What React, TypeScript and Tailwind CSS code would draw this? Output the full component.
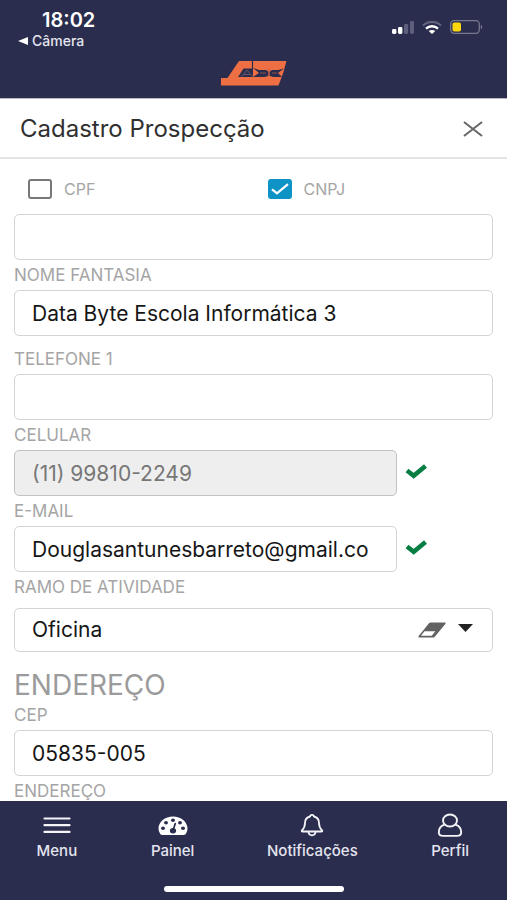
import React, { useState } from 'react'

interface FieldProps {
    id: string
    label?: string
    name?: string
    value: string
    onChange?: (value: string) => void
    type?: string
    disabled?: boolean
    verified?: boolean
}

const labelClass = 'block h-[30px] text-[17px] leading-[30px] text-[#a5a5a5]'

function CheckMark() {
    return (
        <svg viewBox="0 0 22 16" className="w-[22px] h-4 mb-1 shrink-0" fill="none" aria-hidden="true">
            <path d="M2 7.5 8.7 12.7 20.5 3" stroke="#067d43" strokeWidth="4.6" />
        </svg>
    )
}

function Field({ id, label, name, value, onChange, type = 'text', disabled, verified }: FieldProps) {
    return (
        <div>
            {label && <label htmlFor={id} className={labelClass}>{label}</label>}
            <div className="flex items-center gap-2">
                <input
                    id={id}
                    type={type}
                    aria-label={label ? undefined : name}
                    value={value}
                    disabled={disabled}
                    onChange={e => onChange?.(e.target.value)}
                    className={`h-[46px] min-w-0 rounded-[5px] border px-[17px] text-[21px] outline-none ${verified ? 'w-4/5' : 'w-full'} ${disabled ? 'border-[#c2c2c2] bg-[#eeeeee] text-[#777777]' : 'border-[#d4d4d4] bg-white text-[#161616]'}`}
                />
                {verified && <CheckMark />}
            </div>
        </div>
    )
}

function CheckOption({ label, checked, onChange }: { label: string; checked: boolean; onChange: () => void }) {
    return (
        <label className="flex items-center gap-3 pl-3.5 text-base leading-6 text-[#a5a5a5]">
            <span className="relative block w-6 h-5">
                <input
                    type="checkbox"
                    checked={checked}
                    onChange={onChange}
                    className="block w-6 h-5 appearance-none rounded-[3px] border-2 border-[#787878] checked:border-[#0d93c6] checked:bg-[#0d93c6]"
                />
                {checked && (
                    <svg viewBox="0 0 24 20" className="absolute inset-0 w-6 h-5 pointer-events-none" fill="none" aria-hidden="true">
                        <path d="M4 10.3 9 14.4 20 5.2" stroke="#fff" strokeWidth="2.2" />
                    </svg>
                )}
            </span>
            {label}
        </label>
    )
}

function StatusIcons() {
    return (
        <div className="flex items-center gap-2" aria-hidden="true">
            {/* Signal */}
            <svg viewBox="0 0 22 13" className="w-[22px] h-[13px]">
                <rect x="0" y="8" width="4.4" height="5" rx="1.4" fill="#fff" />
                <rect x="6" y="6" width="4.4" height="7" rx="1.4" fill="#fff" />
                <rect x="12" y="3" width="4.2" height="10" rx="1.4" fill="#5d5f7c" />
                <rect x="18" y="0" width="4" height="13" rx="1.4" fill="#5d5f7c" />
            </svg>
            {/* Wi-Fi */}
            <svg viewBox="0 0 20 13" className="w-5 h-[13px]" fill="none">
                <path d="M1 4.5C6-.2 14-.2 19 4.5" stroke="#64667f" strokeWidth="2" />
                <path d="M4 7.6c3.4-3 8.6-3 12 0" stroke="#fff" strokeWidth="2.5" />
                <path d="M6.7 10.1c2-1.5 4.6-1.5 6.6 0L10 13z" fill="#fff" />
            </svg>
            {/* Battery */}
            <svg viewBox="0 0 33 14" className="w-[33px] h-3.5">
                <rect x=".7" y=".7" width="28.6" height="12.6" rx="3.5" fill="none" stroke="#77798f" strokeWidth="1.3" />
                <rect x="2.5" y="2.5" width="8.5" height="9" rx="1.8" fill="#fdd60b" />
                <path d="M30.8 5c1.9.5 1.9 3.5 0 4z" fill="#77798f" />
            </svg>
        </div>
    )
}

function Logo() {
    return (
        <svg viewBox="0 0 66 26" className="w-[66px] h-[26px]" role="img" aria-label="ABC">
            <path d="M18 1H65.5L62.5 12 60.5 17.5 57.5 25.5H0V18H6.5z" fill="#ee6f43" />
            {/* letter A opening */}
            <path d="M17 17 22.5 8.500H32V17z" fill="#2b2d4e" />
            <path d="M20.5 16.5 26 10 31.500 16.500M23 14.500H29" stroke="#685765" strokeWidth="1" fill="none" />
            <path d="M31.500 1V9" stroke="#2b2d4e" strokeWidth="1.200" />
            {/* letters B and C */}
            <path d="M32 8 38 10H45L48 12 51 10H57L63 8.500 57 13 61 17H52L48 15.500 44 17H32L38 13z" fill="#2b2d4e" />
            <path d="M48 9V17" stroke="#c4624a" strokeWidth="1.500" />
            <path d="M39 13H45M51 13H56" stroke="#8b504f" strokeWidth="1" />
        </svg>
    )
}

function MenuIcon() {
    return (
        <svg viewBox="0 0 28 24" className="w-7 h-6" fill="none" stroke="#f4f4f8" strokeWidth="2.2" strokeLinecap="round">
            <path d="M1.5 5.5h25M1.5 12.2h25M1.5 18.9h25" />
        </svg>
    )
}

function GaugeIcon() {
    return (
        <svg viewBox="0 0 30 24" className="w-[30px] h-6">
            <path d="M4.2 22C3 22 2.6 21.6 2 20.6A11 10 0 0 1 .5 15.5C.5 9 7 3.5 15 3.5S29.5 9 29.5 15.5A11 10 0 0 1 28 20.6C27.4 21.6 27 22 25.8 22z" fill="#fff" />
            <g fill="#2b2d4e">
                <ellipse cx="5" cy="15.3" rx="2" ry="1.7" />
                <ellipse cx="8" cy="9.8" rx="2" ry="1.7" />
                <ellipse cx="15" cy="7.2" rx="2" ry="1.7" />
                <ellipse cx="22" cy="9.8" rx="2" ry="1.7" />
                <ellipse cx="25" cy="15.3" rx="2" ry="1.7" />
                <ellipse cx="15" cy="17.8" rx="3.1" ry="2.7" />
            </g>
            <path d="m15 17.5 2.3-7" stroke="#2b2d4e" strokeWidth="1.7" strokeLinecap="round" />
        </svg>
    )
}

function BellIcon() {
    return (
        <svg viewBox="0 0 24 24" className="w-6 h-6" fill="none" stroke="#f4f4f8" strokeWidth="1.8" strokeLinejoin="round">
            <path d="M12 1.8c-1.3 0-1.9.7-1.9 1.7C6.5 4.3 5 6.8 5 10c0 4-1 5.5-3 7.3-.5.6-.3 1.2.5 1.2h19c.8 0 1-.6.5-1.2-2-1.8-3-3.3-3-7.3 0-3.2-1.5-5.7-5.100-6.500 0-1-.6-1.700-1.900-1.700z" />
            <path d="M8.5 18.8c.3 4.7 6.7 4.7 7 0" />
        </svg>
    )
}

function PersonIcon() {
    return (
        <svg viewBox="0 0 26 24" className="w-[26px] h-6" fill="none" stroke="#f4f4f8" strokeWidth="1.9">
            <ellipse cx="13" cy="7.5" rx="7" ry="6" />
            <path d="M7.5 11.7C3.5 13 1.8 16 1.8 19.3c0 2.5 1.5 3.6 4.2 3.6h14c2.700 0 4.200-1.100 4.200-3.600 0-3.300-1.700-6.300-5.700-7.600" />
        </svg>
    )
}

const navItems = [
    { label: 'Menu', icon: MenuIcon },
    { label: 'Painel', icon: GaugeIcon },
    { label: 'Notificações', icon: BellIcon },
    { label: 'Perfil', icon: PersonIcon }
]

export default function App() {
    const [personType, setPersonType] = useState<'cpf' | 'cnpj'>('cnpj')
    const [documentNumber, setDocumentNumber] = useState('')
    const [tradeName, setTradeName] = useState('Data Byte Escola Informática 3')
    const [phone, setPhone] = useState('')
    const [email, setEmail] = useState('Douglasantunesbarreto@gmail.co')
    const [activity, setActivity] = useState('Oficina')
    const [cep, setCep] = useState('05835-005')
    const [address, setAddress] = useState('')

    return (
        <div className="flex h-screen flex-col bg-white font-['Inter','Noto_Sans',sans-serif]">
            {/* Status bar + logo */}
            <header className="shrink-0 border-b border-[#b9bac4] bg-[#2b2d4e] text-white">
                <div className="flex h-[60px] items-start justify-between pl-[18px] pr-6">
                    <div className="pt-2">
                        <div className="pl-6 text-xl font-semibold leading-6">18:02</div>
                        <a href="#" className="flex items-center gap-1 text-sm font-medium leading-[18px] text-[#e4e5ef]">
                            <svg viewBox="0 0 10 8" className="w-2.5 h-2" aria-hidden="true">
                                <path d="M0 4 10 0v8z" fill="#fff" />
                            </svg>
                            Câmera
                        </a>
                    </div>
                    <div className="pt-5">
                        <StatusIcons />
                    </div>
                </div>
                <div className="flex h-[38px] justify-center">
                    <Logo />
                </div>
            </header>

            {/* Title */}
            <div className="flex h-[60px] shrink-0 items-center justify-between border-b-2 border-[#e4e4e4] pl-5 pr-6 pt-0.5">
                <h1 className="text-2xl text-[#303030]">Cadastro Prospecção</h1>
                <button type="button" aria-label="Fechar">
                    <svg viewBox="0 0 20 16" className="w-5 h-4" fill="none" stroke="#666" strokeWidth="2">
                        <path d="m1 1 18 14M19 1 1 15" />
                    </svg>
                </button>
            </div>

            {/* Form */}
            <main className="min-h-0 flex-1 overflow-y-auto px-3.5 [scrollbar-width:none]">
                <form>
                    <div className="grid h-[55px] grid-cols-2 items-center pt-1">
                        <CheckOption label="CPF" checked={personType === 'cpf'} onChange={() => setPersonType('cpf')} />
                        <CheckOption label="CNPJ" checked={personType === 'cnpj'} onChange={() => setPersonType('cnpj')} />
                    </div>
                    <Field id="document" name="Documento" value={documentNumber} onChange={setDocumentNumber} />
                    <Field id="tradeName" label="NOME FANTASIA" value={tradeName} onChange={setTradeName} />
                    <div className="mt-2">
                        <Field id="phone" label="TELEFONE 1" type="tel" value={phone} onChange={setPhone} />
                    </div>
                    <Field id="mobile" label="CELULAR" type="tel" value="(11) 99810-2249" disabled verified />
                    <Field id="email" label="E-MAIL" type="email" value={email} onChange={setEmail} verified />

                    <label htmlFor="activity" className={labelClass}>RAMO DE ATIVIDADE</label>
                    <div className="relative mt-1.5">
                        <select
                            id="activity"
                            value={activity}
                            onChange={e => setActivity(e.target.value)}
                            className="block h-11 w-full appearance-none rounded-[5px] border border-[#d4d4d4] bg-white px-[17px] text-[21px] text-[#161616] outline-none"
                        >
                            <option value="">Selecione</option>
                            <option value="Oficina">Oficina</option>
                        </select>
                        <div className="pointer-events-none absolute inset-y-0 right-5 flex items-center gap-3">
                            <button type="button" aria-label="Limpar" onClick={() => setActivity('')} className="pointer-events-auto">
                                <svg viewBox="0 0 28 16" className="w-7 h-4">
                                    <path d="M12.5.5h14c1.2 0 1.5.6.8 1.5L17 14.5c-.6.7-1 1-2 1H1.5c-1.2 0-1.5-.6-.8-1.5L11 1.3c.5-.6.8-.8 1.5-.8z" fill="#626262" />
                                    <path d="M6.5 9.2h10.8l-3.5 4.5H3z" fill="#fff" />
                                </svg>
                            </button>
                            <svg viewBox="0 0 15 8" className="w-[15px] h-2 mb-1" aria-hidden="true">
                                <path d="M0 0h15L7.5 8z" fill="#222" />
                            </svg>
                        </div>
                    </div>

                    <h2 className="mt-[18px] text-[28px] leading-[30px] text-[#9b9b9b]">ENDEREÇO</h2>
                    <Field id="cep" label="CEP" value={cep} onChange={setCep} />
                    <Field id="address" label="ENDEREÇO" value={address} onChange={setAddress} />
                </form>
            </main>

            {/* Bottom navigation */}
            <footer className="shrink-0 bg-[#2b2d4e]">
                <nav className="grid h-[85px] grid-cols-[57fr_59fr_81fr_57fr] pt-3">
                    {navItems.map(({ label, icon: Icon }) => (
                        <button key={label} type="button" className="flex flex-col items-center gap-0.5 text-[15px] font-medium leading-6 text-[#e4e5ef]">
                            <Icon />
                            {label}
                        </button>
                    ))}
                </nav>
                <div className="mx-auto mb-2 h-1.5 w-[180px] rounded-full bg-white" />
            </footer>
        </div>
    )
}
